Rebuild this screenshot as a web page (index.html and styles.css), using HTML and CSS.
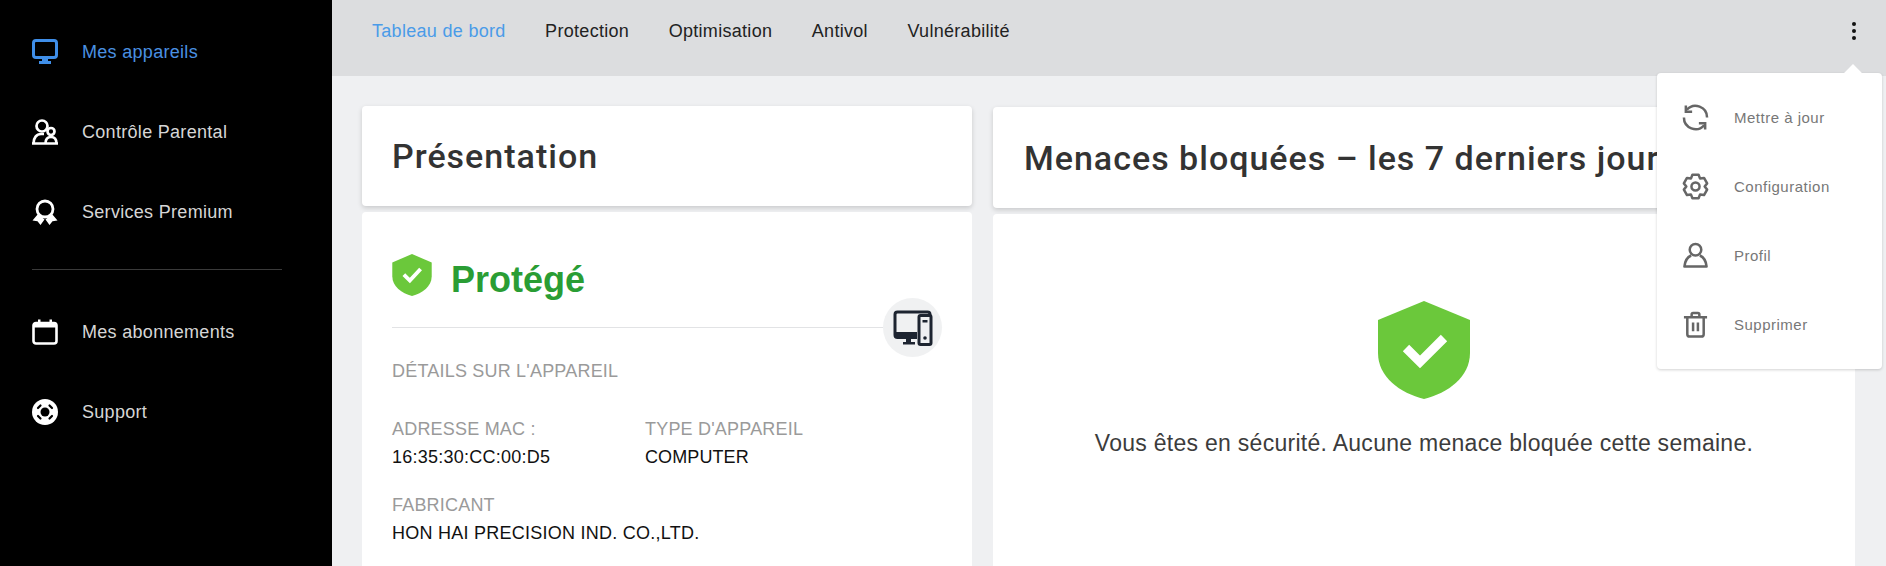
FILE: index.html
```html
<!DOCTYPE html>
<html lang="fr">
<head>
<meta charset="utf-8">
<title>Tableau de bord</title>
<link rel="stylesheet" href="styles.css">
</head>
<body>
<div class="app">
  <aside class="sidebar">
    <a class="side-item active">
      <svg class="side-icon" viewBox="0 0 26 26"><rect x="1.500" y="1.500" width="23" height="17" rx="2.500" fill="none" stroke="currentColor" stroke-width="3"/><path d="M10 19h6v3h3v3H7v-3h3z" fill="currentColor"/></svg>
      <span>Mes appareils</span>
    </a>
    <a class="side-item">
      <svg class="side-icon" viewBox="0 0 26 26" fill="none" stroke="currentColor" stroke-width="2.700"><circle cx="10" cy="7" r="5.500"/><circle cx="19" cy="12.500" r="3.500"/><path d="M1.500 24.500C1.500 19 4.500 15 9 15h3M13.500 24.500c0-4 2-6.500 5.500-6.500s5.500 2.500 5.500 6.500"/><path d="M.5 24.500h25" stroke-linecap="round"/></svg>
      <span>Contrôle Parental</span>
    </a>
    <a class="side-item">
      <svg class="side-icon" viewBox="0 0 26 26"><circle cx="13" cy="10" r="8" fill="none" stroke="currentColor" stroke-width="2.800"/><path d="M6 15 .5 21.500l5 .8 3 3.700 4-5.500zM20 15l5.500 6.500-5 .8-3 3.700-4-5.500z" fill="currentColor"/></svg>
      <span>Services Premium</span>
    </a>
    <div class="side-rule"></div>
    <a class="side-item">
      <svg class="side-icon" viewBox="0 0 26 26"><rect x="1.500" y="4" width="23" height="20.500" rx="2.500" fill="none" stroke="currentColor" stroke-width="2.600"/><rect x="1.500" y="4" width="23" height="4.500" fill="currentColor"/><path d="M6 0.500h2.500V5H6zM17.500 0.500H20V5h-2.500z" fill="currentColor"/></svg>
      <span>Mes abonnements</span>
    </a>
    <a class="side-item">
      <svg class="side-icon" viewBox="0 0 26 26"><circle cx="13" cy="13" r="13" fill="currentColor"/><circle cx="13" cy="13" r="4.500" fill="#000"/><path d="M6 9l2.500-2.500M17.500 6.500 20 9M6 17l2.500 2.500M17.500 19.500 20 17" stroke="#000" stroke-width="2.200" stroke-linecap="round"/></svg>
      <span>Support</span>
    </a>
  </aside>
  <div class="main">
    <header class="topbar">
      <nav class="tabs">
        <a class="tab active">Tableau de bord</a>
        <a class="tab">Protection</a>
        <a class="tab">Optimisation</a>
        <a class="tab">Antivol</a>
        <a class="tab">Vulnérabilité</a>
      </nav>
      <div class="kebab"><i></i><i></i><i></i></div>
    </header>
    <div class="content">
      <section class="col col-left">
        <div class="card card-head"><h2>Présentation</h2></div>
        <div class="card card-body details">
          <div class="status">
            <svg class="shield-small" viewBox="0 0 92 98"><path d="M46 0 92 20V52C92 76 70 92 46 98 22 92 0 76 0 52V20z" fill="#6bc83b"/><path d="M27 48 41 62 66 35" fill="none" stroke="#fff" stroke-width="9"/></svg>
            <span class="status-text">Protégé</span>
          </div>
          <div class="rule-row">
            <div class="rule"></div>
            <div class="device-badge">
              <svg viewBox="0 0 40 40" width="40" height="40"><path d="M37 7.500V6.500A2.500 2.500 0 0 0 34.500 4H4.500A2.500 2.500 0 0 0 2 6.500V27a2.500 2.500 0 0 0 2.500 2.500H24" fill="none" stroke="#1d2430" stroke-width="3"/><path d="M3 24h21v5.500H3zM13 30h5v4h4v2.500H10V34h3z" fill="#1d2430"/><rect x="26" y="7.500" width="12" height="29" rx="1.500" fill="#eff0f2" stroke="#1d2430" stroke-width="3"/><path d="M29.500 12h5v2.500h-5z" fill="#1d2430"/><circle cx="32" cy="30" r="1.800" fill="#1d2430"/></svg>
            </div>
          </div>
          <div class="label section-label">DÉTAILS SUR L'APPAREIL</div>
          <div class="fields">
            <div class="field"><div class="label">ADRESSE MAC :</div><div class="value">16:35:30:CC:00:D5</div></div>
            <div class="field"><div class="label">TYPE D'APPAREIL</div><div class="value type-value">COMPUTER</div></div>
            <div class="field wide"><div class="label">FABRICANT</div><div class="value">HON HAI PRECISION IND. CO.,LTD.</div></div>
          </div>
        </div>
      </section>
      <section class="col col-right">
        <div class="card card-head"><h2>Menaces bloquées – les 7 derniers jours</h2></div>
        <div class="card card-body safe">
          <svg class="shield-big" viewBox="0 0 92 98"><path d="M46 0 92 19V52C92 76 70 92 46 98 22 92 0 76 0 52V19z" fill="#6bc83b"/><path d="M28 47 42 61 66 37" fill="none" stroke="#fff" stroke-width="9"/></svg>
          <p>Vous êtes en sécurité. Aucune menace bloquée cette semaine.</p>
        </div>
      </section>
    </div>
  </div>
  <div class="menu">
    <a class="menu-item">
      <svg viewBox="0 0 28 28"><path d="M26 14A12 12 0 0 0 5 6M2 14A12 12 0 0 0 23 22"/><path d="M4 1.500V8h6.500M24 26.500V20h-6.500"/></svg>
      <span>Mettre à jour</span>
    </a>
    <a class="menu-item">
      <svg viewBox="0 0 28 28"><circle cx="14" cy="14" r="4.200"/><path d="M10.800 1.900H17.200L18.750 5.800 22.840 5.160 26.070 10.770 23.500 14 26.070 17.230 22.840 22.840 18.750 22.200 17.200 26.100H10.800L9.250 22.200 5.160 22.840 1.930 17.230 4.500 14 1.930 10.770 5.160 5.160 9.250 5.800z" stroke-linejoin="round"/></svg>
      <span>Configuration</span>
    </a>
    <a class="menu-item">
      <svg viewBox="0 0 28 28"><circle cx="14" cy="8" r="6"/><path d="M9.500 14C5 16 3 20 2.500 25.500h23C25 20 23 16 18.500 14" stroke-linejoin="round"/></svg>
      <span>Profil</span>
    </a>
    <a class="menu-item">
      <svg viewBox="0 0 28 28"><path d="M2 6.500h24M10 6.500V3.500A1.500 1.500 0 0 1 11.500 2h5A1.500 1.500 0 0 1 18 3.500v3M5.500 6.500V24a2.500 2.500 0 0 0 2.500 2.500h12a2.500 2.500 0 0 0 2.500-2.500V6.500M11.500 12v9M16.500 12v9"/></svg>
      <span>Supprimer</span>
    </a>
  </div>
</div>
</body>
</html>
```

FILE: styles.css
```css
* { box-sizing: border-box; }
html, body { margin: 0; height: 100%; overflow: hidden; }
body { font-family: "Liberation Sans", Arial, sans-serif; background: #eff0f2; }
.app { display: flex; width: 1886px; height: 566px; overflow: hidden; position: relative; }

.sidebar { width: 332px; flex: none; background: #000; padding-top: 12px; display: flex; flex-direction: column; }
.side-item { height: 80px; display: flex; align-items: center; gap: 24px; padding-left: 32px; color: #d6d6d6; font-size: 18px; letter-spacing: .3px; }
.side-item .side-icon { color: #fff; }
.side-item.active { color: #4a90e2; }
.side-item.active .side-icon { color: #3f8ee8; }
.side-icon { width: 26px; height: 26px; flex: none; }
.side-rule { height: 1px; background: #3a3a3a; width: 250px; margin: 17px 0 22px 32px; }

.main { flex: 1; min-width: 0; display: flex; flex-direction: column; }
.topbar { height: 76px; flex: none; background: #dcdddf; display: flex; justify-content: space-between; padding: 0 28px 14px 40px; align-items: center; }
.tabs { display: flex; gap: 39.5px; }
.tab { font-size: 18px; letter-spacing: .3px; color: #222; }
.tab.active { color: #4a9be8; }
.kebab { display: flex; flex-direction: column; gap: 3px; width: 8px; align-items: center; margin-right: 0; }
.kebab i { width: 4px; height: 4px; background: #111; border-radius: 50%; }

.content { display: flex; gap: 21px; padding: 30px 31px 0 30px; flex: 1; min-height: 0; }
.col { display: flex; flex-direction: column; gap: 6px; min-width: 0; }
.col-left { width: 610px; flex: none; }
.col-right { flex: 1; margin-top: 1px; }
.card { background: #fff; border-radius: 4px; }
.card-head { height: 100px; flex: none; display: flex; align-items: center; padding: 0 30px; box-shadow: 0 2px 5px rgba(0,0,0,.16); white-space: nowrap; overflow: hidden; }
.col-right .card-head { height: 101px; padding-left: 31px; }
.card-head h2 { margin: 0; font-family: Roboto, sans-serif; font-weight: 500; font-size: 34px; letter-spacing: 1px; color: #333; }
.card-body { flex: 1; border-radius: 4px 4px 0 0; }

.details { padding: 42px 30px 0; }
.status { display: flex; align-items: flex-start; gap: 19px; height: 44px; }
.shield-small { width: 40px; height: 42px; flex: none; }
.status-text { font-weight: 700; font-size: 36px; line-height: 51px; color: #2a9d34; }
.rule-row { display: flex; align-items: center; height: 59px; margin-right: -30px; }
.rule { flex: 1; height: 1px; background: #e2e3e5; }
.device-badge { width: 59px; height: 59px; border-radius: 50%; background: #f0f1f2; display: flex; align-items: center; justify-content: center; margin-right: 30px; }
.label { font-size: 18px; color: #9a9a9a; letter-spacing: .2px; line-height: 24px; }
.section-label { margin-top: 2px; }
.fields { display: grid; grid-template-columns: 253px 1fr; row-gap: 24px; margin-top: 34px; }
.field.wide { grid-column: 1 / -1; }
.value { font-size: 18px; color: #111; line-height: 24px; margin-top: 4px; letter-spacing: .25px; }
.type-value { letter-spacing: .1px; }

.safe { display: flex; flex-direction: column; align-items: center; padding-top: 87px; }
.shield-big { width: 92px; height: 98px; }
.safe p { margin: 31px 0 0; font-size: 23px; letter-spacing: .28px; color: #3c3c3c; }

.menu { position: absolute; left: 1657px; top: 73px; width: 225px; height: 296px; background: #fff; border-radius: 4px; box-shadow: 0 1px 3px rgba(0,0,0,.18); padding-top: 10px; }
.menu::before { content: ""; position: absolute; left: 189px; top: -6px; width: 14px; height: 14px; background: #fff; transform: rotate(45deg); }
.menu-item { height: 69px; display: flex; align-items: center; gap: 25px; padding-left: 25px; font-size: 15px; letter-spacing: .5px; color: #777; position: relative; }
.menu-item svg { width: 27px; height: 27px; fill: none; stroke: #666; stroke-width: 2.6; flex: none; }
```
